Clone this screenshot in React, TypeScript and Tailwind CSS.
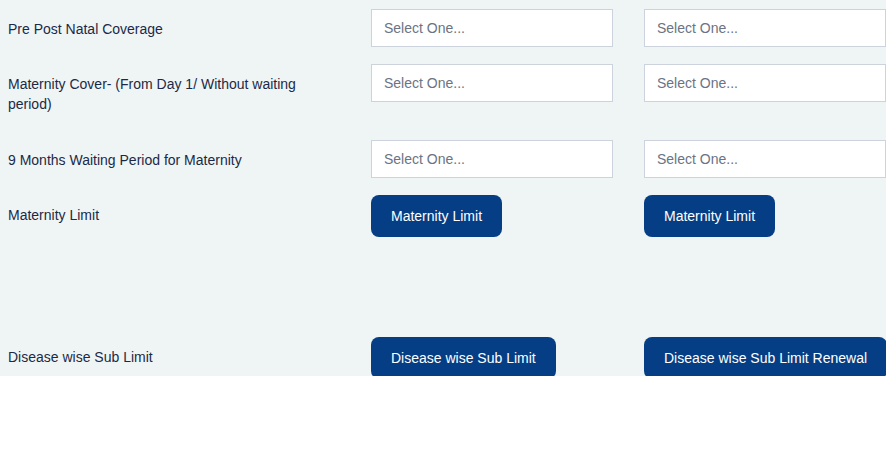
import React from "react";

const font = { fontFamily: '"Liberation Sans", Arial, sans-serif' };

function SelectBox() {
  return (
    <div className="w-[242px] h-[38px] shrink-0 bg-white border border-[#ccd3dd] pl-3 flex items-center text-[14px] text-[#6b7384]">
      Select One...
    </div>
  );
}

function Btn({ label }: { label: string }) {
  return (
    <button
      className="h-[42px] shrink-0 whitespace-nowrap rounded-[8px] bg-[#053e85] text-white text-[14px] px-5"
      style={font}
    >
      {label}
    </button>
  );
}

function Row({
  label,
  a,
  b,
  className = "",
}: {
  label: string;
  a: React.ReactNode;
  b: React.ReactNode;
  className?: string;
}) {
  return (
    <div className={`flex items-start ${className}`}>
      <div className="w-[371px] shrink-0 pl-2 pr-[42px] pt-[10px] pb-[9px] text-[14px] leading-[20px] text-[#1c2946]">
        {label}
      </div>
      <div className="w-[273px] shrink-0">{a}</div>
      <div className="flex-1 min-w-0">{b}</div>
    </div>
  );
}

export default function App() {
  return (
    <div className="w-[886px] h-[460px] bg-white" style={font}>
      <div className="h-[376px] bg-[#eff5f5] overflow-hidden pt-[9px]">
        <Row label="Pre Post Natal Coverage" a={<SelectBox />} b={<SelectBox />} />
        <Row
          className="mt-[16px]"
          label="Maternity Cover- (From Day 1/ Without waiting period)"
          a={<SelectBox />}
          b={<SelectBox />}
        />
        <Row
          className="mt-[17px]"
          label="9 Months Waiting Period for Maternity"
          a={<SelectBox />}
          b={<SelectBox />}
        />
        <Row
          className="mt-[16px]"
          label="Maternity Limit"
          a={<Btn label="Maternity Limit" />}
          b={<Btn label="Maternity Limit" />}
        />
        <Row
          className="mt-[100px]"
          label="Disease wise Sub Limit"
          a={<Btn label="Disease wise Sub Limit" />}
          b={<Btn label="Disease wise Sub Limit Renewal" />}
        />
      </div>
    </div>
  );
}
